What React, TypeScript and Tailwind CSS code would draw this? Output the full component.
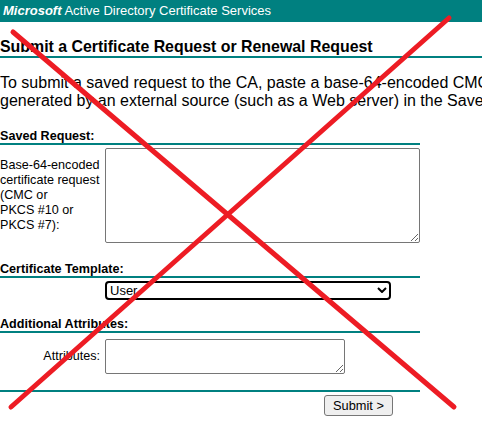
import React from 'react';

const SectionTitle = ({ children }: { children: React.ReactNode }) => (
  <div className="text-[12.6px] font-bold leading-[14px] border-b-2 border-[#008080]">{children}</div>
);

export default function App() {
  return (
    <div className="relative w-[482px] h-[427px] overflow-hidden bg-white text-black font-['Liberation_Sans',Arial,sans-serif]">
      <div className="w-[800px]">
        {/* banner */}
        <div className="h-[22px] bg-[#008080] pl-[3px] text-white text-[13px] leading-[22px] whitespace-nowrap">
          <span className="font-bold italic">Microsoft</span> Active Directory Certificate Services
        </div>

        <h1 className="mt-[16px] text-[15.9px] font-bold leading-[18px] border-b-2 border-[#008080] whitespace-nowrap">
          Submit a Certificate Request or Renewal Request
        </h1>

        <p className="mt-[16px] text-[16px] leading-[18px] whitespace-nowrap">
          To submit a saved request to the CA, paste a base-64-encoded CMC or PKCS #10 certificate request or PKCS #7 renewal request
          <br />
          generated by an external source (such as a Web server) in the Saved Request box.
        </p>

        <form className="w-[420px] mt-[19px]" onSubmit={(e) => e.preventDefault()}>
          <SectionTitle>Saved Request:</SectionTitle>
          <div className="flex mt-[3px]">
            <div className="w-[105px] shrink-0 flex items-center text-[12.6px] leading-[15px]">
              <span>
                Base-64-encoded
                <br />
                certificate request
                <br />
                (CMC or
                <br />
                PKCS #10 or
                <br />
                PKCS #7):
              </span>
            </div>
            <textarea className="w-[315px] h-[95px] border border-[#767676] rounded-[2px] bg-white outline-none" />
          </div>

          <div className="mt-[19px]">
            <SectionTitle>Certificate Template:</SectionTitle>
          </div>
          <div className="flex mt-[3px]">
            <div className="w-[105px] shrink-0" />
            <div className="relative w-[286px] h-[19px]">
              <select className="appearance-none block w-full h-[19px] py-0 pl-[3px] border-2 border-black rounded-[4px] bg-white text-[13px] leading-[15px] outline-none">
                <option>User</option>
              </select>
              <svg className="absolute right-[4px] top-[6px] pointer-events-none" width="10" height="6" viewBox="0 0 10 6">
                <path d="M1 1 L5 5 L9 1" fill="none" stroke="black" strokeWidth="2" />
              </svg>
            </div>
          </div>

          <div className="mt-[17px]">
            <SectionTitle>Additional Attributes:</SectionTitle>
          </div>
          <div className="flex mt-[6px]">
            <div className="w-[105px] shrink-0 flex items-center justify-end pr-[5px] text-[12.6px] leading-[15px]">
              Attributes:
            </div>
            <textarea className="w-[240px] h-[35px] border border-[#767676] rounded-[2px] bg-white outline-none" />
          </div>

          <div className="mt-[16px] border-b-2 border-[#008080]" />
          <div className="flex mt-[3px] pl-[324px]">
            <button
              type="submit"
              className="h-[21px] px-[8px] border border-[#767676] rounded-[3px] bg-[#efefef] text-[12.8px] leading-[19px] whitespace-nowrap"
            >
              Submit &gt;
            </button>
          </div>
        </form>
      </div>

      {/* red cross drawn over the page */}
      <svg className="absolute inset-0 pointer-events-none" width="482" height="427" viewBox="0 0 482 427">
        <line x1="13" y1="32" x2="454" y2="407" stroke="#ed1c24" strokeWidth="5" strokeLinecap="round" />
        <line x1="449" y1="18" x2="11" y2="407" stroke="#ed1c24" strokeWidth="5" strokeLinecap="round" />
      </svg>
    </div>
  );
}
